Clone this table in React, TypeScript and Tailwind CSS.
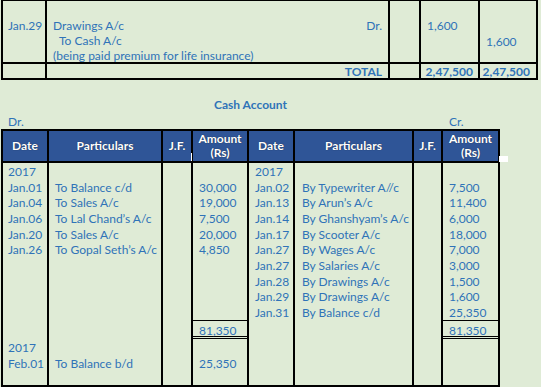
import React from 'react';

type Col = {
  w: string;
  head: string[];
  upper: string[];
  total?: string;
  lower: string[];
  pl: string;
};

const cols: Col[] = [
  { w: 'w-[46px]', head: ['Date'], upper: ['2017', 'Jan.01', 'Jan.04', 'Jan.06', 'Jan.20', 'Jan.26'], lower: ['2017', 'Feb.01'], pl: 'pl-[5px]' },
  { w: 'w-[114px]', head: ['Particulars'], upper: ['', 'To Balance c/d', 'To Sales A/c', 'To Lal Chand’s A/c', 'To Sales A/c', 'To Gopal Seth’s A/c'], lower: ['', 'To Balance b/d'], pl: 'pl-[6px]' },
  { w: 'w-[30px]', head: ['J.F.'], upper: [], lower: [], pl: 'pl-[6px]' },
  { w: 'w-[56px]', head: ['Amount', '(Rs)'], upper: ['', '30,000', '19,000', '7,500', '20,000', '4,850'], total: '81,350', lower: ['', '25,350'], pl: 'pl-[6px]' },
  { w: 'w-[46px]', head: ['Date'], upper: ['2017', 'Jan.02', 'Jan.13', 'Jan.14', 'Jan.17', 'Jan.27', 'Jan.27', 'Jan.28', 'Jan.29', 'Jan.31'], lower: [], pl: 'pl-[6px]' },
  { w: 'w-[119px]', head: ['Particulars'], upper: ['', 'By Typewriter A//c', 'By Arun’s A/c', 'By Ghanshyam’s A/c', 'By Scooter A/c', 'By Wages A/c', 'By Salaries A/c', 'By Drawings A/c', 'By Drawings A/c', 'By Balance c/d'], lower: [], pl: 'pl-[7px]' },
  { w: 'w-[29px]', head: ['J.F.'], upper: [], lower: [], pl: 'pl-[6px]' },
  { w: 'w-[55px]', head: ['Amount', '(Rs)'], upper: ['', '7,500', '11,400', '6,000', '18,000', '7,000', '3,000', '1,500', '1,600', '25,350'], total: '81,350', lower: [], pl: 'pl-[6px]' },
];

const Lines = ({ items }: { items: string[] }) => (
  <>
    {items.map((t, i) => (
      <div key={i} className="h-[15.7px] whitespace-nowrap">
        {t || '\u00a0'}
      </div>
    ))}
  </>
);

export default function App() {
  return (
    <div
      className="w-[541px] h-[387px] overflow-hidden bg-[#dfebd6] text-[#2f73b8] text-[12px] leading-[15.7px]"
      style={{ fontFamily: 'Lato, "Open Sans", sans-serif' }}
    >
      {/* journal tail */}
      <div className="ml-px w-[537px] border-2 border-black border-t-[1.5px]">
        <div className="flex h-[62.8px] border-b-2 border-black">
          <div className="w-[44px] shrink-0 border-r-2 border-black pl-[5px] pt-[17px]">Jan.29</div>
          <div className="w-[343px] shrink-0 border-r-2 border-black pl-[6px] pt-[17px] leading-[15px] relative">
            <div>Drawings A/c</div>
            <div className="pl-[6px]">To Cash A/c</div>
            <div>(being paid premium for life insurance)</div>
            <div className="absolute right-[6px] top-[17px]">Dr.</div>
          </div>
          <div className="w-[31px] shrink-0 border-r-2 border-black" />
          <div className="w-[59px] shrink-0 border-r-2 border-black pl-[6px] pt-[17px]">1,600</div>
          <div className="w-[56px] shrink-0 pl-[6px] pt-[33px]">1,600</div>
        </div>
        <div className="flex h-[14.7px] font-bold leading-[15px]">
          <div className="w-[44px] shrink-0 border-r-2 border-black" />
          <div className="w-[343px] shrink-0 border-r-2 border-black pr-[6px] text-right">TOTAL</div>
          <div className="w-[31px] shrink-0 border-r-2 border-black" />
          <div className="w-[59px] shrink-0 border-r-2 border-black pr-[5px] text-right">2,47,500</div>
          <div className="w-[56px] shrink-0 pr-[6px] text-right">2,47,500</div>
        </div>
      </div>

      <div className="w-[501px] text-center font-bold mt-[17px] h-[16px]">Cash Account</div>
      <div className="flex h-[12px] mt-px">
        <span className="w-[449px] pl-[8px]">Dr.</span>
        <span>Cr.</span>
      </div>

      {/* ledger */}
      <div className="relative ml-px w-[499px] mt-[2.5px]">
        <div className="flex border-2 border-black bg-[#2f5597] text-white font-bold text-[12px] leading-[14px] h-[34px]">
          {cols.map((c, i) => (
            <div
              key={i}
              className={`${c.w} shrink-0 flex flex-col items-center justify-center ${i < cols.length - 1 ? 'border-r-2 border-black' : ''}`}
              style={{ textShadow: '0 0 1px rgba(0,0,0,0.6)' }}
            >
              {c.head.map((h) => (
                <div key={h}>{h}</div>
              ))}
            </div>
          ))}
        </div>
        <div className="absolute left-[190px] top-[24px] w-px h-[8px] bg-white" />
        <div className="absolute left-[498px] top-[27px] w-[9px] h-[6px] bg-white" />
        <div className="flex border-2 border-t-0 border-black h-[224px]">
          {cols.map((c, i) => (
            <div
              key={i}
              className={`${c.w} shrink-0 flex flex-col ${i < cols.length - 1 ? 'border-r-2 border-black' : ''}`}
            >
              <div className={`h-[157px] pt-px ${c.pl}`}>
                <Lines items={c.upper} />
              </div>
              <div
                className={`h-[19px] ${c.total ? 'border-t border-b-[3px] border-double border-black' : ''}`}
              >
                {c.total && <div className="pl-[6px] pt-[2px] leading-[15px]">{c.total}</div>}
              </div>
              <div className={`pt-px ${c.pl}`}>
                <Lines items={c.lower} />
              </div>
            </div>
          ))}
        </div>
      </div>
    </div>
  );
}
